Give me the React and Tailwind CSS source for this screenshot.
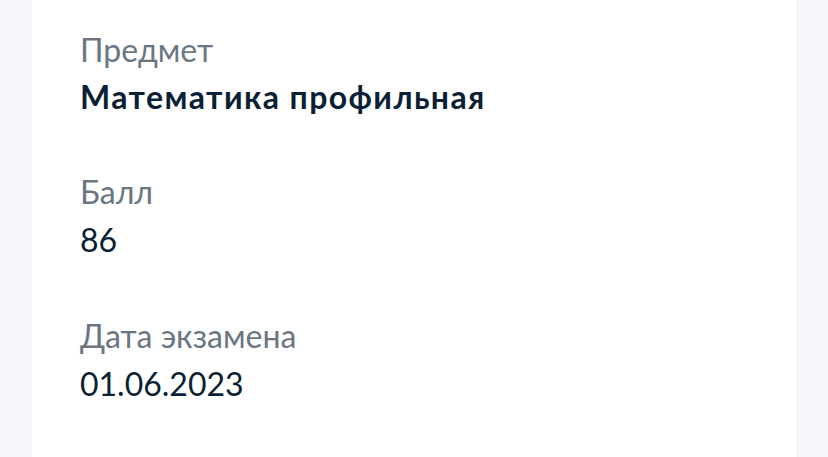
import React from 'react';

const rows = [
    { label: 'Предмет', value: 'Математика профильная', bold: true },
    { label: 'Балл', value: '86' },
    { label: 'Дата экзамена', value: '01.06.2023' },
];

const App = () => {
    return (
        <div className="min-h-[457px] bg-[#f5f6fa] px-8 font-['Lato',sans-serif]">
            <div className="bg-white min-h-[457px] px-12 pt-[26px] pb-12 flex flex-col gap-12">
                {rows.map(row => (
                    <div key={row.label} className="flex flex-col">
                        <span className="text-[32px] leading-[48px] text-[#6b7683]">{row.label}</span>
                        {row.bold ? (
                            <span className="text-[32px] leading-[46px] font-bold tracking-[1.4px] text-[#0b1f35]">{row.value}</span>
                        ) : (
                            <span className="text-[32px] leading-[48px] text-[#0b1f35]">{row.value}</span>
                        )}
                    </div>
                ))}
            </div>
        </div>
    );
};

export default App;
